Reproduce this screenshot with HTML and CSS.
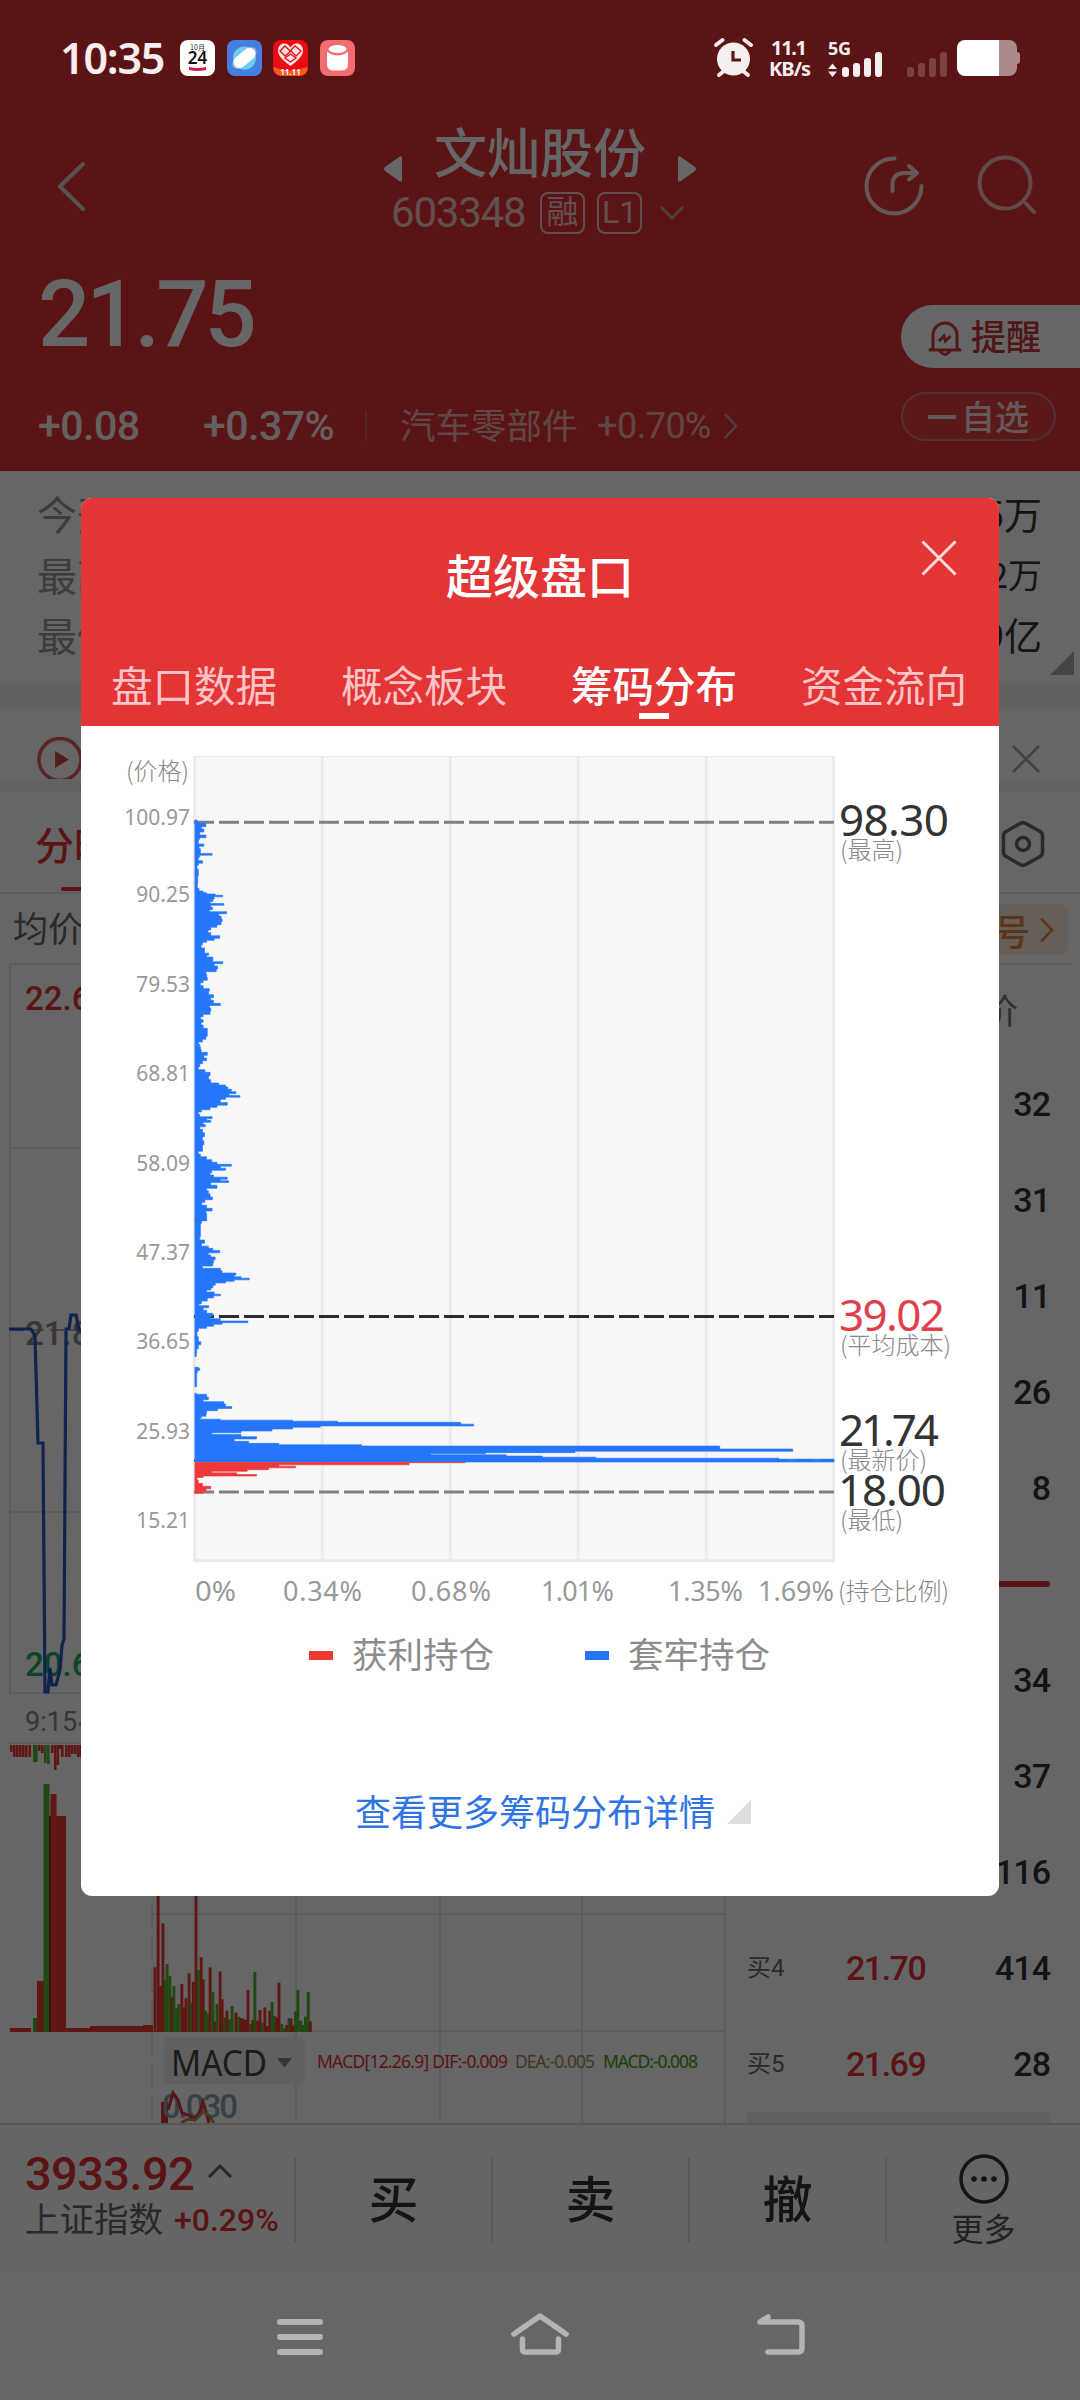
FILE: index.html
```html
<!DOCTYPE html>
<html lang="zh-CN">
<head>
<meta charset="utf-8">
<title>文灿股份 603348</title>
<link rel="stylesheet" href="styles.css">
</head>
<body>
<div class="screen">
  <header class="top">
    <div class="status">
      <span class="clock">10:35</span>
      <svg class="apps" width="176" height="36" viewBox="0 0 176 36">
        <rect width="35" height="36" rx="8" fill="#fff"/>
        <text x="17.500" y="10" class="app-tiny" text-anchor="middle">10月</text>
        <text x="17.500" y="24" class="app-day" text-anchor="middle">24</text>
        <path d="M9 27q8.500 2 17 0v3q-8.500 2-17 0z" fill="#d01a50"/>
        <rect x="47" width="35" height="36" rx="8" fill="#467fdd"/>
        <circle cx="64.500" cy="18" r="11.500" fill="#68cff5"/>
        <ellipse cx="64.500" cy="18" rx="14.500" ry="7" fill="#8cb2ef" transform="rotate(-40 64.500 18)"/>
        <rect x="52" y="12" width="25" height="12" rx="6" fill="#fff" transform="rotate(-40 64.500 18)"/>
        <rect x="93" width="35" height="36" rx="8" fill="#e90c13"/>
        <path d="M93.500 27q17 7 34 0a8 8 0 0 1-8 9h-18a8 8 0 0 1-8-9z" fill="#f65a20"/>
        <path d="M110.500 26C101 19 98 15 98 10.500a6.500 6.500 0 0 1 12.500-3 6.500 6.500 0 0 1 12.500 3c0 4.500-3 8.500-12.500 15.500z" fill="#ffe3e3"/>
        <path d="M100 11l5-5 5 5 5-5 6 5-5 5-5-5-6 5zM105 18l5.500-4 5.500 4-5.500 4z" fill="none" stroke="#e90c13" stroke-width="1.300"/>
        <text x="110.500" y="34.500" class="app-1111" text-anchor="middle">11.11</text>
        <rect x="140" width="35" height="36" rx="8" fill="#f06e70"/>
        <ellipse cx="157.500" cy="9" rx="9" ry="4" fill="#fff"/>
        <path d="M147 12q10.500 7 21 0v12q0 6-6 6.500h-9q-6-.5-6-6.500z" fill="#fff"/>
      </svg>
      <svg class="signals" width="310" height="42" viewBox="712 36 310 42">
        <g fill="#f5eeee"><circle cx="733.500" cy="59" r="16.500"/>
        <path d="M716 45l6.500-5M751 45l-6.500-5M724 71l-5 4M743 71l5 4" stroke="#f5eeee" stroke-width="4" stroke-linecap="round"/>
        <path d="M733 51v9h8" fill="none" stroke="#5b1516" stroke-width="3.200"/>
        <text x="771" y="55" class="sig" textLength="36">11.1</text>
        <text x="769" y="76" class="sig" textLength="42">KB/s</text>
        <text x="828" y="55" class="sig5" textLength="23">5G</text>
        <path d="M828 69l4.500-5.500 4.500 5.500zM828 71.500l4.500 5.500 4.500-5.500z"/>
        <rect x="842" y="67" width="7" height="10" rx="3"/><rect x="853" y="63" width="7" height="14" rx="3"/><rect x="864" y="58" width="7" height="19" rx="3"/><rect x="875" y="52" width="7" height="25" rx="3"/></g>
        <g fill="#7c4141"><rect x="907" y="67" width="7" height="10" rx="3"/><rect x="918" y="63" width="7" height="14" rx="3"/><rect x="929" y="58" width="7" height="19" rx="3"/><rect x="940" y="52" width="7" height="25" rx="3"/></g>
        <path d="M999 40h10a8 8 0 0 1 8 8v4q3 0 3 3v6q0 3-3 3v4a8 8 0 0 1-8 8h-10z" fill="#ad8a8a"/>
        <path d="M965 40h34v36h-34a8 8 0 0 1-8-8v-20a8 8 0 0 1 8-8z" fill="#fff"/>
      </svg>
    </div>
    <div class="titlebar">
      <svg class="back" width="40" height="60" viewBox="50 156 40 60"><path d="M83 164L60 186.500l23 22.500" fill="none" stroke="#d9cccc" stroke-width="4" stroke-linecap="round" stroke-linejoin="round"/></svg>
      <div class="stock">
        <div class="name-row">
          <svg width="18" height="26"><path d="M18 2v22q0 3-3 1L1 15q-2-2 0-4L15 1q3-2 3 1z" fill="#fff"/></svg>
          <span class="name">文灿股份</span>
          <svg width="18" height="26"><path d="M0 2v22q0 3 3 1l14-10q2-2 0-4L3 1Q0-1 0 2z" fill="#fff"/></svg>
        </div>
        <div class="code-row">
          <span class="code">603348</span><span class="tag">融</span><span class="tag">L1</span>
          <svg width="26" height="16" viewBox="0 0 26 16"><path d="M2 2l11 11L24 2" fill="none" stroke="#c9a5a5" stroke-width="2.500"/></svg>
        </div>
      </div>
      <svg class="tools" width="190" height="70" viewBox="860 150 190 70" fill="none" stroke="#fff" stroke-opacity=".82" stroke-width="4" stroke-linecap="round">
        <path d="M894.500 158.500a27.500 27.500 0 1 0 27 27.500"/><path d="M892.500 191v-6q0-12 12-12h11M909 166l8 7-8 6.500" stroke-linejoin="round"/>
        <g stroke-opacity=".65"><circle cx="1005" cy="183" r="25.500"/><path d="M1026 203.500l8 8.500"/></g>
      </svg>
    </div>
    <div class="quote">
      <div class="price">21.75</div>
      <div class="change"><b>+0.08</b><b class="pct">+0.37%</b><i class="bar"></i><span class="sector">汽车零部件</span><span class="sector-pct">+0.70%</span>
        <svg width="15" height="26"><path d="M2 1l11 12L2 25" fill="none" stroke="#cf9c9c" stroke-width="2.500"/></svg></div>
    </div>
    <div class="actions">
      <div class="remind"><svg width="34" height="36" viewBox="0 0 34 36" fill="none" stroke="#d0383b" stroke-width="3"><path d="M5 28V14a12 12 0 0 1 24 0v14l3 1H2zM12 30q5 7 10 0" stroke-linejoin="round"/><path d="M11 20l5-5 1.500 5 5-5"/></svg><span>提醒</span></div>
      <div class="fav"><i></i><span>自选</span></div>
    </div>
  </header>

  <section class="stats">
    <div class="stat"><span>今开</span><b>5万</b></div>
    <div class="stat"><span>最高</span><b class="small">2万</b></div>
    <div class="stat"><span>最低</span><b>9亿</b></div>
    <svg class="corner" width="24" height="24"><path d="M24 0v24H0z" fill="#aaa"/></svg>
  </section>
  <section class="notice">
    <svg width="46" height="42" viewBox="37 737 46 42"><circle cx="60" cy="759.500" r="21" fill="none" stroke="#e25a5d" stroke-width="3.500"/><path d="M55 751v17l14-8.500z" fill="#d04a4d"/></svg>
    <svg class="nx" width="28" height="28"><path d="M1 1l26 26M27 1L1 27" stroke="#a5a5a5" stroke-width="2.500"/></svg>
  </section>
  <section class="tabs"><span>分时</span>
    <svg width="44" height="48" viewBox="1001 820 44 48" fill="none" stroke="#666" stroke-width="3.500"><path d="M1020 823.500q3-1.500 6 0l14 8q2.500 1.500 2.500 4v17q0 2.500-2.500 4l-14 8q-3 1.500-6 0l-14-8q-2.500-1.500-2.500-4v-17q0-2.500 2.500-4z"/><circle cx="1023" cy="844" r="6.500"/></svg>
  </section>
  <section class="info"><span>均价</span><div class="signal"><b>信号</b><svg width="14" height="26"><path d="M1 1.500L12 13 1 24.500" fill="none" stroke="#e0863f" stroke-width="2.500"/></svg></div></section>

  <main class="market">
    <svg class="intraday" width="735" height="1158" viewBox="0 965 735 1158">
      <g stroke="#e6e6e6" stroke-width="2" fill="none">
        <path d="M10 965v728h725M10 1148h725M10 1512h725M9 1743h725M152 1914h573M9 2031h716M296 1743v380M440 1743v380M582 1743v380M725 1743v380"/>
        <path d="M152 1743v380" stroke-dasharray="26 6"/>
        <path d="M10 1330h720" stroke="#aaa" stroke-dasharray="14 6"/>
      </g>
      <text x="25" y="1010" class="axis up">22.65</text>
      <text x="25" y="1345" class="axis mid">21.87</text>
      <text x="25" y="1676" class="axis down">20.69</text>
      <text x="25" y="1731" class="time">9:15~9:25</text>
      <path d="M9 1329H31L35 1336 38 1443H43L45 1692H48L50 1668 52 1685H56L60 1670 62 1645 64 1639 66 1329H69L71 1315H76L79 1330H84" fill="none" stroke="#2659c4" stroke-width="3.200"/>
      <g id="volume"></g>
      <path d="M161 2102h7v21h-7z" fill="#e33436"/>
      <rect x="164" y="2037" width="141" height="47" rx="5" fill="#efefef"/>
      <text x="171" y="2076" class="macd" textLength="96" lengthAdjust="spacingAndGlyphs">MACD</text>
      <path d="M277 2058h15l-7.500 9.500z" fill="#888"/>
      <text x="317" y="2068" class="ind r" textLength="191">MACD[12.26.9] DIF:-0.009</text>
      <text x="515" y="2068" class="ind y" textLength="80">DEA:-0.005</text>
      <text x="603" y="2068" class="ind g" textLength="95">MACD:-0.008</text>
      <text x="162" y="2118" class="axis slate" textLength="76">0.030</text>
      <path d="M168 2110l5-17 5 7 4 13 6 2 7 4 5-8 3-9 3 10 3 11" fill="none" stroke="#e33436" stroke-width="3"/>
      <path d="M181 2123l7-4 7 1 9-9 6 6 4 6" fill="none" stroke="#b08a50" stroke-width="3"/>
    </svg>
    <div class="book">
      <div class="book-head">均价</div>
      <div class="lvl"><em>32</em></div>
      <div class="lvl"><em>31</em></div>
      <div class="lvl"><em>11</em></div>
      <div class="lvl"><em>26</em></div>
      <div class="lvl"><em>8</em></div>
      <div class="lvl"><i></i></div>
      <div class="lvl"><em>34</em></div>
      <div class="lvl"><em>37</em></div>
      <div class="lvl"><em>116</em></div>
      <div class="lvl"><span>买4</span><b>21.70</b><em>414</em></div>
      <div class="lvl"><span>买5</span><b>21.69</b><em>28</em></div>
      <div class="strip"></div>
    </div>
  </main>

  <footer class="trade">
    <div class="index">
      <div class="idx-top"><b>3933.92</b><svg width="26" height="16"><path d="M2 14L13 3l11 11" fill="none" stroke="#666" stroke-width="3"/></svg></div>
      <div class="idx-sub"><span>上证指数</span><b>+0.29%</b></div>
    </div>
    <div class="act">买</div><div class="act">卖</div><div class="act">撤</div>
    <div class="more"><svg width="50" height="50"><circle cx="25" cy="25" r="23" fill="none" stroke="#333" stroke-width="3.500"/><g fill="#333"><circle cx="15" cy="25" r="2.800"/><circle cx="25" cy="25" r="2.800"/><circle cx="35" cy="25" r="2.800"/></g></svg><span>更多</span></div>
  </footer>
  <nav class="sysnav">
    <svg width="1080" height="126" viewBox="0 2274 1080 126" fill="none" stroke="#b4b4b4" stroke-width="6" stroke-linecap="round" stroke-linejoin="round">
      <path d="M280 2322h40M280 2337h40M280 2352h40"/>
      <path d="M514 2334l26-18 26 18" stroke-width="5.500"/><path d="M522.500 2339v10q0 3 3 3h30q3 0 3-3v-10" stroke-width="5.500"/>
      <path d="M768 2317l-8 5h38q4 0 4 4v22q0 4-4 4h-30" stroke-width="5.500"/>
    </svg>
  </nav>

  <div class="scrim"></div>

  <div class="dialog">
    <div class="dlg-head">
      <svg class="close" width="36" height="36"><path d="M1.500 1.500l33 33M34.500 1.500l-33 33" stroke="#ffdcdc" stroke-width="3"/></svg>
      <h1>超级盘口</h1>
      <div class="dlg-tabs"><span>盘口数据</span><span>概念板块</span><span class="on">筹码分布</span><span>资金流向</span></div>
    </div>
    <svg class="chips" width="918" height="894" viewBox="81 726 918 894">
      <rect x="193" y="756" width="642" height="806" fill="#f7f7f8"/>
      <path d="M193 756.500h642" stroke="#ebebeb"/>
      <path d="M194.500 756v806M322.300 756v806M450.400 756v806M578.200 756v806M706.300 756v806M833.500 756v806M193 1560.500h642" stroke="#ebebeb" stroke-width="3"/>
      <g stroke-width="3" stroke-dasharray="20 5"><path d="M194 822.200h640M194 1492h640" stroke="#808080"/><path d="M194 1316.500h640" stroke="#2d2d2d"/><path d="M194 1460.500h640" stroke="#555" stroke-width="2.500"/></g>
      <g id="chips"></g>
      <g class="ylab" text-anchor="end">
        <text x="189" y="780" class="unit">(价格)</text>
        <text x="190" y="824.500">100.97</text><text x="190" y="901.500">90.25</text><text x="190" y="991.500">79.53</text><text x="190" y="1080.500">68.81</text><text x="190" y="1171">58.09</text><text x="190" y="1259.500">47.37</text><text x="190" y="1349">36.65</text><text x="190" y="1439">25.93</text><text x="190" y="1528">15.21</text>
      </g>
      <g class="big">
        <text x="839" y="836" textLength="110">98.30</text><text x="839" y="1331" textLength="106" class="avg">39.02</text><text x="839" y="1446" textLength="100">21.74</text><text x="838" y="1506" textLength="108">18.00</text>
      </g>
      <g class="unit">
        <text x="840" y="859">(最高)</text><text x="840" y="1354">(平均成本)</text><text x="840" y="1469">(最新价)</text><text x="840" y="1529">(最低)</text><text x="838" y="1600">(持仓比例)</text>
      </g>
      <g class="xlab">
        <text x="195" y="1601" textLength="41" lengthAdjust="spacingAndGlyphs">0%</text><text x="283" y="1601" textLength="79">0.34%</text><text x="411" y="1601" textLength="80">0.68%</text><text x="541" y="1601" textLength="73">1.01%</text><text x="668" y="1601" textLength="75">1.35%</text><text x="758" y="1601" textLength="76">1.69%</text>
      </g>
    </svg>
    <div class="legend"><i class="r"></i><span>获利持仓</span><i class="b"></i><span>套牢持仓</span></div>
    <div class="detail"><span>查看更多筹码分布详情</span><svg width="24" height="24"><path d="M24 0v24H0z" fill="#ddd"/></svg></div>
  </div>
</div>
<script src="chart.js"></script>
</body>
</html>
```
FILE: styles.css
```css
* { box-sizing: border-box; }
body { margin: 0; font-family: "Noto Sans", "Noto Sans CJK SC", sans-serif; color: #333; }
svg { display: block; flex: none; }
i, em { font-style: normal; }
.screen { position: relative; width: 1080px; height: 2400px; overflow: hidden; background: #fff; display: flex; flex-direction: column; }
.top, .stats, .notice, .tabs, .info, .market, .trade, .sysnav { flex: none; }

.top { position: relative; height: 471px; background: #e33436; color: #fff; }
.status { position: relative; z-index: 3; height: 100px; display: flex; padding: 36px 58px 0 60px; }
.clock { font: 600 43px/44px "Noto Sans", sans-serif; letter-spacing: -1.2px; width: 120px; color: #f8eded; }
.apps { margin-top: 4px; }
.signals { margin-left: auto; }
.app-tiny { font: 7px "Noto Sans CJK SC", sans-serif; fill: #222; }
.app-day { font: 600 17px "Noto Sans", sans-serif; fill: #111; }
.app-1111 { font: 700 8px "Noto Sans", sans-serif; fill: #fff; }
.sig, .sig5 { font: 700 20px "Noto Sans", sans-serif; }
.sig5 { font-size: 18px; }

.titlebar { display: flex; align-items: flex-start; height: 150px; padding-left: 50px; }
.back { margin-top: 56px; }
.stock { width: 340px; margin-left: 280px; padding-top: 15px; }
.name-row { display: flex; align-items: center; justify-content: space-between; height: 70px; padding: 0 14px; }
.name-row svg { margin-top: 37px; }
.name { font: 500 53px/70px "Noto Sans CJK SC", sans-serif; }
.code-row { display: flex; align-items: center; height: 50px; margin-top: 3px; padding-left: 21px; color: rgba(255,255,255,.72); }
.code { width: 149px; font: 42px/50px Roboto, sans-serif; letter-spacing: -1.2px; }
.tag { width: 45px; height: 42px; margin-right: 12px; border: 2.500px solid; border-radius: 8px; text-align: center; font: 32px/36px Roboto, "Noto Sans CJK SC", sans-serif; }
.code-row svg { margin-left: 5px; }
.tools { margin: 50px 30px 0 auto; }

.quote { padding-left: 38px; }
.price { padding-top: 2px; font: 500 92px/126px Roboto, sans-serif; letter-spacing: -4px; }
.change { display: flex; align-items: center; height: 50px; margin-top: 23px; }
.change b { font: 500 41px/50px Roboto, sans-serif; letter-spacing: -.5px; width: 165px; color: #fff; opacity: .92; }
.change .pct { width: 162px; }
.bar { width: 2px; height: 30px; background: #c86a6a; margin-right: 33px; }
.sector { font: 35.500px/50px "Noto Sans CJK SC", sans-serif; width: 197px; margin-top: -4px; opacity: .6; }
.sector-pct { font: 36px/50px Roboto, sans-serif; width: 126px; opacity: .6; letter-spacing: -.5px; }

.actions { position: absolute; right: 0; top: 305px; width: 179px; }
.remind { height: 63px; background: #fff; border-radius: 32px 0 0 32px; display: flex; align-items: center; padding-left: 27px; gap: 9px; color: #c9383b; font: 500 35px/60px "Noto Sans CJK SC", sans-serif; }
.remind span { margin-top: -4px; }
.remind svg { margin-top: 4px; }
.fav { margin-top: 24px; width: 155px; height: 49px; border: 2px solid #cc8080; border-radius: 25px; display: flex; align-items: center; padding-left: 25px; background: rgba(255,255,255,.06); font: 500 34px/44px "Noto Sans CJK SC", sans-serif; color: #f3dede; }
.fav i { width: 28px; height: 4px; background: #f3dede; margin-right: 5px; }
.fav span { margin-top: -2px; }

.stats { position: relative; height: 240px; padding: 12px 38px 0 37px; border-bottom: 30px solid #f2f2f2; }
.stat { display: flex; justify-content: space-between; height: 60.500px; font: 40px/60px "Noto Sans CJK SC", sans-serif; color: #999; }
.stat b { font-weight: 400; font-size: 38px; color: #333; }
.stat .small { font-size: 34px; }
.corner { position: absolute; right: 6px; bottom: 6px; }
.notice { height: 82px; border-bottom: 14px solid #f6f6f6; padding: 26px 40px 0 37px; display: flex; justify-content: space-between; }
.nx { margin-top: 8px; }
.tabs { height: 101px; border-bottom: 2px solid #e6e6e6; display: flex; align-items: center; justify-content: space-between; padding: 2px 35px 0; }
.tabs span { position: relative; font: 500 39px/99px "Noto Sans CJK SC", sans-serif; color: #e33436; }
.tabs span::after { content: ""; position: absolute; left: 26px; bottom: 2px; width: 32px; height: 4px; border-radius: 2px; background: #e33436; }
.info { height: 71px; border-bottom: 2px solid #e6e6e6; margin: 0 9px; padding: 0 3px 0 4px; display: flex; align-items: center; justify-content: space-between; font: 35px/66px "Noto Sans CJK SC", sans-serif; color: #696969; }
.info > span { margin-top: -4px; }
.signal { display: flex; align-items: center; gap: 10px; height: 51px; margin-top: 2px; padding: 0 14px; border-radius: 8px; background: #ffeddc; color: #e0863f; }
.signal b { font: 500 36px/46px "Noto Sans CJK SC", sans-serif; }

.market { height: 1158px; display: flex; overflow: hidden; }
.axis { font: 500 33px Roboto, sans-serif; }
.up { fill: #e33436; } .mid { fill: #8b8b8b; } .down { fill: #1cb060; } .slate { fill: #8aa0b0; }
.time { font: 27px Roboto, sans-serif; fill: #8b8b8b; }
.macd { font: 37px "Noto Sans", sans-serif; fill: #444; }
.ind { font: 17.500px "Noto Sans", sans-serif; }
.ind.r { fill: #e33436; } .ind.y { fill: #a98b58; } .ind.g { fill: #479a10; }
.book { flex: 1; padding: 0 30px 0 12px; }
.book-head { height: 91px; padding-right: 32px; text-align: right; font: 35px/88px "Noto Sans CJK SC", sans-serif; color: #777; }
.lvl { height: 96px; display: flex; align-items: center; justify-content: flex-end; font: 500 34px/96px Roboto, sans-serif; letter-spacing: -1px; color: #333; }
.lvl i { flex: 1; height: 6px; border-radius: 3px; background: #e33436; }
.lvl span { font: 24px/96px Roboto, "Noto Sans CJK SC", sans-serif; letter-spacing: 0; color: #696969; width: 99px; }
.lvl b { font-weight: 500; color: #e33436; letter-spacing: -1.5px; }
.lvl span ~ em { flex: 1; text-align: right; }
.strip { height: 12px; background: #eceff5; }

.trade { height: 151px; border-top: 2px solid #d9d9d9; background: #fdfdfd; display: flex; align-items: center; }
.index { width: 294px; padding-left: 25px; }
.idx-top { display: flex; align-items: center; gap: 13px; height: 50px; margin-top: -8px; }
.idx-top b { font: 500 47px/50px Roboto, sans-serif; letter-spacing: -.6px; color: #e33436; }
.idx-top svg { margin-top: -6px; }
.idx-sub { display: flex; align-items: center; gap: 11px; height: 46px; margin-top: -2px; font: 34.500px/44px "Noto Sans CJK SC", sans-serif; color: #666; }
.idx-sub span { margin-top: -5px; }
.idx-sub b { font: 500 32px/46px Roboto, sans-serif; color: #e33436; }
.act { width: 197px; height: 84px; border-left: 2px solid #dcdcdc; text-align: center; font: 500 50px/77px "Noto Sans CJK SC", sans-serif; }
.more { flex: 1; height: 84px; border-left: 2px solid #dcdcdc; display: flex; flex-direction: column; align-items: center; font: 32px/46px "Noto Sans CJK SC", sans-serif; color: #555; }
.more svg { margin-top: -4px; }
.sysnav { position: relative; z-index: 3; height: 126px; }

.scrim { position: absolute; inset: 0; z-index: 1; background: rgba(0,0,0,.6); }

.dialog { position: absolute; z-index: 2; left: 81px; top: 498px; width: 918px; height: 1398px; border-radius: 11px; background: #fff; overflow: hidden; font-family: "Noto Sans CJK SC", sans-serif; }
.dlg-head { height: 228px; background: #e33536; color: #fff; }
.close { position: absolute; right: 42px; top: 42px; }
h1 { margin: 0; padding-top: 41px; text-align: center; font: 500 47px/70px "Noto Sans CJK SC", sans-serif; }
.dlg-tabs { display: flex; justify-content: space-between; padding: 42px 32px 0 30px; font-size: 41.500px; line-height: 66px; color: #ffc4c6; }
.dlg-tabs .on { position: relative; color: #fff; font-weight: 500; }
.dlg-tabs .on::after { content: ""; position: absolute; left: 68px; bottom: -2px; width: 30px; height: 6px; background: #fff; }
.ylab, .unit { font: 21px "Noto Sans", "Noto Sans CJK SC", sans-serif; fill: #999; }
.unit { font: 300 24px "Noto Sans CJK SC", sans-serif; fill: #888; }
.big { font: 44px "Noto Sans", sans-serif; fill: #333; }
.avg { fill: #df4049; }
.xlab { font: 27px "Noto Sans", sans-serif; fill: #999; }
.legend { display: flex; align-items: center; height: 60px; margin-top: 4px; padding-left: 228px; font-size: 35.500px; line-height: 56px; color: #8c8c8c; }
.legend i { width: 24px; height: 9px; margin: 2px 19px 0 0; }
.legend .r { background: #ee3834; }
.legend .b { background: #2476fd; }
.legend span { width: 233px; margin-top: -3px; }
.legend span:last-child { width: auto; }
.detail { display: flex; align-items: center; gap: 12px; height: 60px; margin-top: 96px; padding-left: 274px; font-size: 36px; line-height: 60px; color: #2f74e6; }
.detail svg { margin-top: 4px; }
```
FILE: chart.js
```js
const NS = 'http://www.w3.org/2000/svg';

function rect(parent, x, y, w, h, fill) {
  const r = document.createElementNS(NS, 'rect');
  Object.entries({ x, y, width: w, height: h, fill }).forEach(([k, v]) => r.setAttribute(k, v));
  parent.appendChild(r);
}

// Chip distribution: "level:extent" samples, each bar reaches halfway to its neighbours.
const SX = 2.904, SY = 3, BASE = 566;
function profile(top, fill, samples) {
  const g = document.getElementById('chips');
  const p = samples.split(' ').map(s => s.split(':').map(Number));
  let d = '';
  p.forEach(([y, x], i) => {
    const a = i ? (y + p[i - 1][0]) / 2 : y;
    const b = i < p.length - 1 ? (y + p[i + 1][0]) / 2 : y + 2;
    d += `${i ? 'L' : `M${BASE / SX} ${top + a / SY}L`}${x / SX} ${top + a / SY}V${top + b / SY}`;
  });
  d += `H${BASE / SX}Z`;
  const path = document.createElementNS(NS, 'path');
  path.setAttribute('d', d);
  path.setAttribute('fill', fill);
  path.setAttribute('stroke', fill);
  path.setAttribute('stroke-width', 0.6);
  g.appendChild(path);
}
const BLUE = '#2476fd', RED = '#ee383b';
profile(720, BLUE, '300:572 306:575 312:598 318:598 322:585 332:592 340:580 350:598 356:580 360:577 368:576 376:592 382:578 390:582 398:582 403:616 408:580 416:576 428:588 432:576 440:572 455:576 480:574 500:573 510:578 516:590 520:600 524:625 528:647 533:622 542:618 548:610 553:650 558:612 566:617 572:608 578:658 584:635 592:642 600:645 610:642 618:630 626:612 634:604 642:612 652:638 658:622 664:600 670:588 678:584 690:594 696:594 703:606 708:600 714:618 722:618 728:647 734:622 742:632 752:628 758:598 766:600 778:602 784:590 792:582 802:590 810:608 818:606 830:620 836:612 846:620 854:640 859:608 868:612 880:610 886:590 894:583 904:590 910:584 920:590 930:602 944:602 954:598 962:588 970:576 976:580 984:582 992:584 1002:602 1010:592 1018:600 1026:588 1036:580 1046:576 1052:595 1062:610 1072:606 1086:612 1092:635 1098:655 1104:662 1112:672 1118:685 1124:665 1129:697 1134:655 1142:640 1153:660 1158:630 1166:610 1172:585 1180:576 1186:580 1194:616 1198:600 1204:612 1210:590 1217:596 1224:580 1232:588 1244:594 1256:588 1268:592 1280:588 1290:588 1298:576 1306:582 1314:600 1324:615 1330:630 1336:672 1341:640 1348:655 1354:615 1362:610 1368:620 1375:660 1380:640 1385:664 1390:612 1402:630 1408:600 1416:605 1426:610 1436:617 1442:595 1452:586 1460:600 1470:616 1476:598 1484:600 1500:600');
profile(1160, BLUE, '178:600 186:585 195:582 210:582 225:582 235:580 245:594 255:585 262:605 268:618 275:638 282:605 288:612 294:625 304:620 314:618 322:588 328:640 336:645 342:685 348:680 352:700 357:724 362:680 366:655 372:625 380:618 388:612 392:600 400:622 405:640 410:620 418:602 428:585 434:578 440:606 446:590 456:600 464:618 472:612 480:640 486:720 490:645 496:620 502:600 508:576 520:572 540:576 550:583 558:576 575:571 588:570');
profile(1160, BLUE, '622:576 628:580 634:574 640:571 678:571');
profile(1160, BLUE, '700:570 706:600 716:605 722:590 728:650 736:655 743:673 748:632 756:600 766:598 772:585 776:580 779:640 782:850 785:980 789:1338 796:1375 800:930 804:850 810:790 816:700 821:615 826:700 834:745 840:680 848:722 852:810 856:1050 860:2090 865:2090 869:2302 872:2302 876:1670 880:1410 883:1250 886:1470 890:1575 893:1730 896:2262 899:2422 904:2422');
profile(1160, RED, '907:1350 909:1188 913:1188 916:810 921:858 926:780 932:718 936:615 941:688 946:745 950:590 955:572 966:576 975:588 983:612 990:598 998:590');

// Volume histogram under the intraday line.
const vol = document.getElementById('volume');
const UP = '#f03a34', DOWN = '#50b52d', FLOOR = 2032;
[[10, 2028, 21, UP], [65, 2028, 25, UP], [90, 2026, 53, UP], [143, 2025, 10, UP],
 [33, 2018, 4, DOWN], [37, 1981, 7, UP], [43.5, 1784, 6, DOWN], [49, 1816, 2, '#702a20'],
 [50.5, 1794, 6, UP], [56, 1816, 10, UP]]
  .forEach(([x, y, w, c]) => rect(vol, x, y, w, FLOOR - y, c));
('450:982r 459:760r 466:1038r 473:850r 480:1020g 485:972g 493:1008g 499:1072r 505:1038g 513:1105g 519:1092g 528:1032r 534:1102r 540:1075r 549:1000r 554:1088g 561:1025r 569:760r 576:990g 584:952r 590:1018r 597:1112g 603:1120g 610:982r 618:1056g 624:1145r 630:1092g 639:994r 645:1078r 652:1132g 659:1112r 666:1138g 674:1098g 685:1118r 693:1130g 700:1134r 706:1136r 713:1140r 720:1050r 728:1152g 734:1140r 740:996g 748:1142r 755:1110r 761:1148g 769:1102r 776:1158r 783:1112r 790:1086g 797:1128g 803:1132r 810:1028r 818:1152g 825:1165g 832:1155r 839:1134g 845:1136r 851:1156r 858:1114g 865:1050g 873:1142g 880:1155g 887:1130g 895:1056g 901:1144r')
  .split(' ').forEach(s => {
    const [, x, y, c] = s.match(/(\d+):(\d+)(.)/);
    const top = 1640 + y / 3;
    rect(vol, x / SX - 1.4, top, 2.9, FLOOR - top, c === 'r' ? UP : DOWN);
  });

// Order-flow ticks hanging from the divider.
[[10, 7, UP], [13, 12, UP], [16, 12, UP], [19, 12, UP], [22, 12, UP], [25, 12, UP], [28.5, 12, UP],
 [33, 17, DOWN], [35, 17, DOWN], [38, 6, UP], [41, 8, UP], [44, 18, DOWN], [47, 19, DOWN], [51, 8, UP],
 [54, 25, UP], [56.5, 20, UP], [59, 4, UP], [61, 12, UP], [65, 12, UP], [68, 12, UP], [71, 9, UP],
 [74, 9, UP], [77, 12, UP], [79.5, 12, UP]]
  .forEach(([x, h, c]) => rect(vol, x, 1745, 2.6, h, c));
```
